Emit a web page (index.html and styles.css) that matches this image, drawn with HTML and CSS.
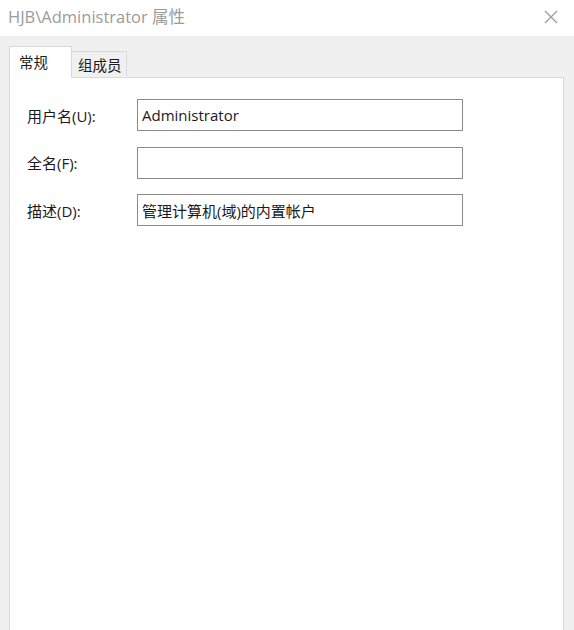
FILE: index.html
```html
<!DOCTYPE html>
<html>
  <head>
    <title>HJB\Administrator 属性</title>
    <link rel="stylesheet" href="styles.css">
  </head>
  <body>
    <div class="titlebar">
      <span class="title">HJB\Administrator 属性</span>
      <span class="close">
        <svg width="14" height="14" viewBox="0 0 14 14"><path d="M1 1 L13 13 M13 1 L1 13" stroke="#9a9a9a" stroke-width="1.2" fill="none"/></svg>
      </span>
    </div>
    <div class="body">
      <div class="tabs">
        <div class="tab active">常规</div>
        <div class="tab">组成员</div>
      </div>
      <div class="panel">
        <div class="row">
          <label>用户名(U):</label>
          <div class="field">Administrator</div>
        </div>
        <div class="row">
          <label>全名(F):</label>
          <div class="field"></div>
        </div>
        <div class="row">
          <label>描述(D):</label>
          <div class="field">管理计算机(域)的内置帐户</div>
        </div>
      </div>
    </div>
  </body>
</html>
```

FILE: styles.css
```css
html, body {
  margin: 0;
  height: 100%;
}
body {
  font-family: "Open Sans", "Noto Sans CJK SC", sans-serif;
  background: #f0f0f0;
  color: #1a1a1a;
  display: flex;
  flex-direction: column;
  overflow: hidden;
}
.titlebar {
  height: 36px;
  background: #fff;
  display: flex;
  align-items: center;
  justify-content: space-between;
  padding: 0 16px 0 8px;
  flex-shrink: 0;
}
.title {
  color: #9b9b9b;
  font-size: 16.5px;
  margin-top: -4px;
}
.close {
  display: flex;
  margin-top: -2px;
}
.body {
  flex: 1;
  display: flex;
  flex-direction: column;
  padding: 10px 10px 0 9px;
}
.tabs {
  display: flex;
  align-items: flex-end;
  height: 31px;
  flex-shrink: 0;
  position: relative;
  z-index: 1;
}
.tab {
  font-size: 14.5px;
  height: 25px;
  width: 55px;
  background: #f0f0f0;
  border: 1px solid #d9d9d9;
  border-bottom: none;
  border-left: none;
  box-sizing: border-box;
  padding: 2px 0 0 6px;
  margin-bottom: 1px;
}
.tab.active {
  height: 32px;
  width: 63px;
  background: #fff;
  border-left: 1px solid #d9d9d9;
  padding: 4px 0 0 9px;
  margin-bottom: -1px;
}
.panel {
  flex: 1;
  background: #fff;
  border: 1px solid #d9d9d9;
  border-bottom: none;
  padding: 21px 0 0 17px;
  display: flex;
  flex-direction: column;
  gap: 15.5px;
}
.row {
  display: flex;
  align-items: center;
}
.row label {
  width: 110px;
  font-size: 15px;
}
.field {
  width: 326px;
  height: 32px;
  box-sizing: border-box;
  border: 1px solid #8a8a8a;
  font-size: 15px;
  padding: 0 4px;
  display: flex;
  align-items: center;
}
```
